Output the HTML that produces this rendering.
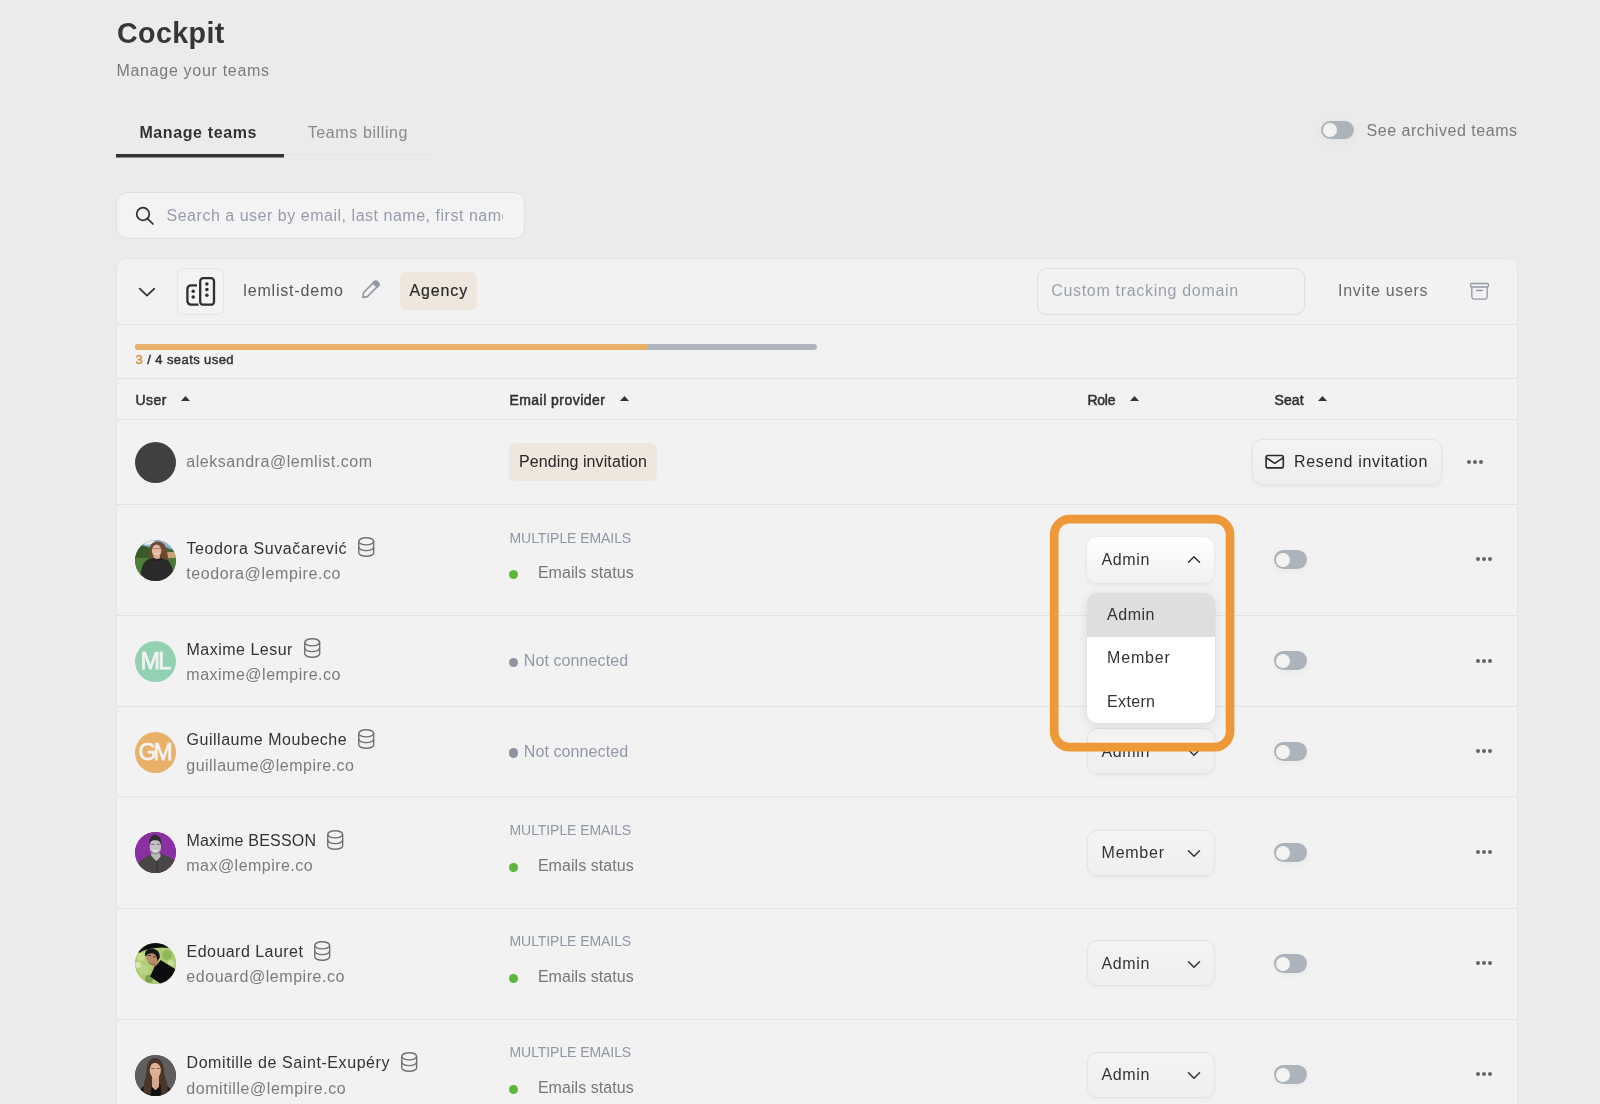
<!DOCTYPE html>
<html lang="en">
<head>
<meta charset="utf-8">
<title>Cockpit</title>
<style>
*{box-sizing:border-box;margin:0;padding:0}
html,body{width:1600px;height:1104px;overflow:hidden}
body{background:#ebebeb;font-family:"Liberation Sans",sans-serif;color:#333;position:relative}
#root{position:absolute;left:0;top:0;width:1600px;height:1104px;will-change:transform}
.a{position:absolute;white-space:nowrap;line-height:1}
.tog{position:absolute;width:32.6px;height:19px;border-radius:9.5px;background:#adb3bb;box-shadow:0 2px 8px rgba(0,0,0,.04)}
.tog i{position:absolute;left:2px;top:2.6px;width:14px;height:14px;border-radius:50%;background:#f3f3f3}
.sep{position:absolute;left:117px;width:1400px;height:1px;background:#e2e2e2}
.sel{position:absolute;left:1087px;width:128px;height:46px;border-radius:10px;border:1px solid #e3e3e3;background:linear-gradient(#f4f4f4,#efefef);box-shadow:0 2px 4px rgba(0,0,0,.04)}
.dots{position:absolute;width:16px;height:4px}
.dots i{position:absolute;top:0;width:4px;height:4px;border-radius:50%;background:#666}
.av{position:absolute;left:135px;width:41px;height:41px;border-radius:50%;overflow:hidden}
</style>
</head>
<body>
<div id="root">
<div class="a" style="left:116.90px;top:19.00px;font-size:28.6px;color:#363636;letter-spacing:0.437px;font-weight:700;">Cockpit</div>
<div class="a" style="left:116.50px;top:63.00px;font-size:16px;color:#7b7b7b;letter-spacing:0.693px;">Manage your teams</div>
<div class="a" style="left:139.40px;top:125.00px;font-size:16px;color:#333;letter-spacing:0.612px;font-weight:700;">Manage teams</div>
<div class="a" style="left:307.70px;top:125.00px;font-size:16px;color:#8a8a8a;letter-spacing:0.610px;">Teams billing</div>
<div class="a" style="left:116px;top:154px;width:168px;height:3px;background:#333"></div>
<div class="a" style="left:116px;top:157px;width:168px;height:1px;background:#8a8a8a"></div>
<div class="a" style="left:284px;top:154px;width:147px;height:1px;background:#e4e4e4"></div>
<div class="tog" style="left:1321px;top:121px;height:18px"><i style="top:2px"></i></div>
<div class="a" style="left:1366.50px;top:123.00px;font-size:16px;color:#7b7b7b;letter-spacing:0.535px;">See archived teams</div>
<div class="a" style="left:116px;top:192px;width:409px;height:47px;border-radius:11px;background:#f3f3f3;border:1px solid #e0e0e0"></div>
<svg class="a" style="left:134px;top:205px" width="22" height="22" viewBox="0 0 22 22" fill="none" stroke="#2f2f2f" stroke-width="1.7" stroke-linecap="round"><circle cx="9" cy="9" r="6.3"/><path d="M13.8 13.8 19 19"/></svg>
<div class="a" style="left:166.50px;top:208.00px;font-size:16px;color:#959cab;letter-spacing:0.522px;width:336px;overflow:hidden;">Search a user by email, last name, first name</div>
<div class="a" style="left:116px;top:258px;width:1402px;height:900px;background:#f2f2f2;border:1px solid #e6e6e6;border-radius:10px"></div>
<svg class="a" style="left:136px;top:284px" width="22" height="16" viewBox="0 0 22 16" fill="none" stroke="#333" stroke-width="1.8" stroke-linecap="round" stroke-linejoin="round"><path d="M3.7 4.6 11 11.6 18.3 4.6"/></svg>
<div class="a" style="left:177px;top:268px;width:47px;height:46.5px;border-radius:7px;background:#f3f3f3;border:1px solid #e4e4e4"></div>
<svg class="a" style="left:184px;top:275px" width="34" height="34" viewBox="0 0 34 34" fill="none" stroke="#2f2f2f" stroke-width="2.3" stroke-linejoin="round"><rect x="16.2" y="3.2" width="13.8" height="26.5" rx="3"/><path d="M13 10.300H7a3.600 3.600 0 0 0-3.600 3.600v12.200a3.600 3.600 0 0 0 3.600 3.600h7.500" stroke-linecap="butt"/><g fill="#2f2f2f" stroke="none"><circle cx="22.9" cy="8.9" r="1.75"/><circle cx="22.9" cy="14.6" r="1.75"/><circle cx="22.9" cy="20.2" r="1.75"/><circle cx="9.2" cy="16.3" r="1.75"/><circle cx="9.2" cy="21.9" r="1.75"/></g></svg>
<div class="a" style="left:243.30px;top:283.00px;font-size:16px;color:#555;letter-spacing:0.819px;">lemlist-demo</div>
<svg class="a" style="left:360px;top:278px" width="22" height="22" viewBox="0 0 22 22" fill="none" stroke="#9299a5" stroke-width="1.6" stroke-linejoin="round" stroke-linecap="round"><path d="M14.6 3.4 18.6 7.4 7.4 18.6 2.8 19.4 3.6 14.6Z"/><path d="M13 5l4 4 1.8-1.8a1.4 1.4 0 0 0 0-2L17 3.400a1.400 1.400 0 0 0-2 0Z" fill="#9299a5"/></svg>
<div class="a" style="left:400px;top:272px;width:77.3px;height:37.8px;border-radius:6px;background:#efe6dd"></div>
<div class="a" style="left:409.50px;top:283.00px;font-size:16px;color:#2a2a2a;letter-spacing:0.868px;-webkit-text-stroke:0.2px #2a2a2a;">Agency</div>
<div class="a" style="left:1037px;top:268px;width:267.5px;height:46.5px;border-radius:10px;background:#f2f2f2;border:1px solid #dedede;box-shadow:0 1px 2px rgba(0,0,0,.03)"></div>
<div class="a" style="left:1051.20px;top:283.00px;font-size:16px;color:#9aa0ab;letter-spacing:0.690px;">Custom tracking domain</div>
<div class="a" style="left:1338.00px;top:283.00px;font-size:16px;color:#6a6a6a;letter-spacing:0.708px;">Invite users</div>
<svg class="a" style="left:1468px;top:280px" width="24" height="22" viewBox="0 0 24 22" fill="none" stroke="#9299a5" stroke-width="1.3" stroke-linejoin="round" stroke-linecap="round"><rect x="2.6" y="3.5" width="17.8" height="3.5" rx="1"/><path d="M3.8 7v9.600a2.600 2.600 0 0 0 2.600 2.600h10.200a2.600 2.600 0 0 0 2.600-2.600V7"/><path d="M8.600 10.500h5.800"/></svg>
<div class="sep" style="top:324px"></div>
<div class="a" style="left:135px;top:343.6px;width:682px;height:6.8px;background:#b0b5bd;border-radius:3.5px"></div>
<div class="a" style="left:135px;top:343.6px;width:512px;height:6.8px;background:#e8b068;border-radius:3.5px 0 0 3.5px"></div>
<div class="a" style="left:135.60px;top:353.00px;font-size:13px;color:#333;letter-spacing:0.408px;-webkit-text-stroke:0.45px #333;"><span style="color:#d9913b;-webkit-text-stroke-color:#d9913b">3</span> / 4 seats used</div>
<div class="sep" style="top:378px"></div>
<div class="a" style="left:135.60px;top:393.00px;font-size:14px;color:#303030;letter-spacing:0.382px;-webkit-text-stroke:0.5px #303030;">User</div>
<svg class="a" style="left:181.2px;top:396px" width="9" height="5" viewBox="0 0 9 5"><path d="M4.500 0 9 5H0Z" fill="#333"/></svg>
<div class="a" style="left:509.40px;top:393.00px;font-size:14px;color:#303030;letter-spacing:0.471px;-webkit-text-stroke:0.5px #303030;">Email provider</div>
<svg class="a" style="left:619.7px;top:396px" width="9" height="5" viewBox="0 0 9 5"><path d="M4.500 0 9 5H0Z" fill="#333"/></svg>
<div class="a" style="left:1087.40px;top:393.00px;font-size:14px;color:#303030;letter-spacing:-0.233px;-webkit-text-stroke:0.5px #303030;">Role</div>
<svg class="a" style="left:1130.2px;top:396px" width="9" height="5" viewBox="0 0 9 5"><path d="M4.500 0 9 5H0Z" fill="#333"/></svg>
<div class="a" style="left:1274.40px;top:393.00px;font-size:14px;color:#303030;letter-spacing:0.167px;-webkit-text-stroke:0.5px #303030;">Seat</div>
<svg class="a" style="left:1318.2px;top:396px" width="9" height="5" viewBox="0 0 9 5"><path d="M4.500 0 9 5H0Z" fill="#333"/></svg>
<div class="sep" style="top:419px"></div>
<div class="av" style="top:441.8px;background:#404040"></div>
<div class="a" style="left:186.30px;top:454.00px;font-size:16px;color:#7b7b7b;letter-spacing:0.532px;">aleksandra@lemlist.com</div>
<div class="a" style="left:509px;top:443px;width:148.2px;height:37.7px;border-radius:6px;background:#efe6dd"></div>
<div class="a" style="left:519.00px;top:454.00px;font-size:16px;color:#272727;letter-spacing:0.099px;">Pending invitation</div>
<div class="a" style="left:1251.5px;top:439.3px;width:190px;height:45.6px;border-radius:10px;border:1px solid #e3e3e3;background:linear-gradient(#f4f4f4,#eeeeee);box-shadow:0 2px 4px rgba(0,0,0,.05)"></div>
<svg class="a" style="left:1263px;top:452px" width="24" height="20" viewBox="0 0 24 20" fill="none" stroke="#2a2a2a" stroke-width="1.6" stroke-linejoin="round" stroke-linecap="round"><rect x="3.100" y="3.500" width="17.2" height="12.400" rx="2"/><path d="M3.400 5.800 11.700 11.300 20 5.800"/></svg>
<div class="a" style="left:1294.00px;top:454.00px;font-size:16px;color:#2a2a2a;letter-spacing:0.660px;">Resend invitation</div>
<div class="dots" style="left:1467px;top:459.7px"><i style="left:0"></i><i style="left:5.8px"></i><i style="left:11.6px"></i></div>
<div class="sep" style="top:504px"></div>
<div class="av" style="top:539.7px;background:#4a7a3a"><svg width="41" height="41" viewBox="0 0 41 41"><defs><filter id="b2"><feGaussianBlur stdDeviation=".55"/></filter></defs><g filter="url(#b2)"><rect width="41" height="41" fill="#3f6b31"/><path d="M0 0h41v11L30 7 18 8 6 5 0 9Z" fill="#8fb0d8"/><path d="M8 0h12l-2 4-8 1Z" fill="#e9eef5"/><path d="M0 9 8 6l10 5v12H0Z" fill="#375a2c"/><path d="M0 18h14v23H0Z" fill="#4d7f3a"/><path d="M30 12h11v8H31Z" fill="#c9a27a"/><path d="M31 18h10v23H28Z" fill="#467a35"/><path d="M14.500 17C13 9 15 2 22 1.500 29.500 1 32 8 32.500 14 33 19 34 20 33.500 21.500L27 19 16 19Z" fill="#6e4a33"/><ellipse cx="21.600" cy="10.800" rx="4.700" ry="6.200" fill="#e3b7a0"/><path d="M18.500 13.500h6.500v7h-6.500Z" fill="#dcae96"/><path d="M19.500 13.300q2.300 1.500 4.500 0" stroke="#fff" stroke-width=".8" fill="none"/><path d="M17 8.500h9" stroke="#8a6a5a" stroke-width=".6"/><path d="M5 41C5.500 29 8 21 14 19l5-1.200q3 2.500 6.500 0L31 19.500c5 2 7.500 9 8 21.500Z" fill="#2b2b2c"/><path d="M18.500 18q3.500 3.400 7.500 0l.6 1.200q-4.300 3.600-8.800 0Z" fill="#1c1c1c"/></g></svg></div>
<div class="a" style="left:186.50px;top:541.00px;font-size:16px;color:#333;letter-spacing:0.594px;">Teodora Suvačarević</div>
<svg class="a" style="left:356.9px;top:536.2px" width="19" height="22" viewBox="0 0 19 22" fill="none" stroke="#707070" stroke-width="1.4"><ellipse cx="9.2" cy="5.3" rx="7.45" ry="3.6"/><path d="M1.75 5.300v11.400c0 2 3.300 3.600 7.450 3.600s7.450-1.600 7.450-3.600V5.300"/><path d="M1.75 11c0 2 3.300 3.600 7.450 3.600s7.450-1.600 7.450-3.600"/></svg>
<div class="a" style="left:186.30px;top:566.00px;font-size:16px;color:#7b7b7b;letter-spacing:0.575px;">teodora@lempire.co</div>
<div class="a" style="left:509.50px;top:531.00px;font-size:14px;color:#8f97a5;letter-spacing:-0.069px;">MULTIPLE EMAILS</div>
<div class="a" style="left:509.1px;top:570.0px;width:9.4px;height:9.2px;border-radius:50%;background:#5bb83b"></div>
<div class="a" style="left:537.90px;top:565.00px;font-size:16px;color:#777;letter-spacing:0.055px;">Emails status</div>
<div class="sel" style="top:537px;width:127px;background:linear-gradient(#fff,#f1f1f1);border:none;box-shadow:0 2px 5px rgba(0,0,0,.06),0 0 1px rgba(0,0,0,.08)"></div>
<div class="a" style="left:1101.60px;top:552.00px;font-size:16px;color:#333;letter-spacing:0.585px;">Admin</div>
<svg class="a" style="left:1187.3px;top:554.6px" width="14" height="9" viewBox="0 0 14 9" fill="none" stroke="#333" stroke-width="1.5" stroke-linecap="round" stroke-linejoin="round"><path d="M1.5 7.300 7 1.800 12.500 7.300"/></svg>
<div class="tog" style="left:1274px;top:550px"><i></i></div>
<div class="dots" style="left:1476px;top:557.4px"><i style="left:0"></i><i style="left:5.8px"></i><i style="left:11.6px"></i></div>
<div class="sep" style="top:615px"></div>
<div class="av" style="top:640.8px;background:#92d1b1"></div>
<div class="a" style="left:140.80px;top:650.00px;font-size:23px;color:#f3f3f3;letter-spacing:-1.747px;-webkit-text-stroke:0.75px #f3f3f3;">ML</div>
<div class="a" style="left:186.50px;top:642.00px;font-size:16px;color:#333;letter-spacing:0.493px;">Maxime Lesur</div>
<svg class="a" style="left:302.7px;top:637.3px" width="19" height="22" viewBox="0 0 19 22" fill="none" stroke="#707070" stroke-width="1.4"><ellipse cx="9.2" cy="5.3" rx="7.45" ry="3.6"/><path d="M1.75 5.300v11.400c0 2 3.300 3.600 7.450 3.600s7.450-1.600 7.450-3.600V5.300"/><path d="M1.75 11c0 2 3.300 3.600 7.450 3.600s7.450-1.600 7.450-3.600"/></svg>
<div class="a" style="left:186.30px;top:667.00px;font-size:16px;color:#7b7b7b;letter-spacing:0.503px;">maxime@lempire.co</div>
<div class="a" style="left:509.1px;top:657.75px;width:9.4px;height:9.35px;border-radius:50%;background:#8d93a1"></div>
<div class="a" style="left:523.80px;top:653.00px;font-size:16px;color:#9098a6;letter-spacing:0.093px;">Not connected</div>
<div class="tog" style="left:1274px;top:651px"><i></i></div>
<div class="dots" style="left:1476px;top:658.5px"><i style="left:0"></i><i style="left:5.8px"></i><i style="left:11.6px"></i></div>
<div class="sep" style="top:706px"></div>
<div class="av" style="top:731.5px;background:#e8b068"></div>
<div class="a" style="left:138.60px;top:741.00px;font-size:23px;color:#f3f3f3;letter-spacing:-3.053px;-webkit-text-stroke:0.75px #f3f3f3;">GM</div>
<div class="a" style="left:186.50px;top:732.00px;font-size:16px;color:#333;letter-spacing:0.529px;">Guillaume Moubeche</div>
<svg class="a" style="left:357.0px;top:728.0px" width="19" height="22" viewBox="0 0 19 22" fill="none" stroke="#707070" stroke-width="1.4"><ellipse cx="9.2" cy="5.3" rx="7.45" ry="3.6"/><path d="M1.75 5.300v11.400c0 2 3.300 3.600 7.450 3.600s7.450-1.600 7.450-3.600V5.300"/><path d="M1.75 11c0 2 3.300 3.600 7.450 3.600s7.450-1.600 7.450-3.600"/></svg>
<div class="a" style="left:186.30px;top:758.00px;font-size:16px;color:#7b7b7b;letter-spacing:0.477px;">guillaume@lempire.co</div>
<div class="a" style="left:509.1px;top:748.45px;width:9.4px;height:9.35px;border-radius:50%;background:#8d93a1"></div>
<div class="a" style="left:523.80px;top:744.00px;font-size:16px;color:#9098a6;letter-spacing:0.093px;">Not connected</div>
<div class="sel" style="top:728px;"></div>
<div class="a" style="left:1101.60px;top:744.00px;font-size:16px;color:#333;letter-spacing:0.585px;">Admin</div>
<svg class="a" style="left:1187.3px;top:748.3px" width="14" height="9" viewBox="0 0 14 9" fill="none" stroke="#333" stroke-width="1.5" stroke-linecap="round" stroke-linejoin="round"><path d="M1.5 1.800 7 7.300 12.500 1.800"/></svg>
<div class="tog" style="left:1274px;top:742px"><i></i></div>
<div class="dots" style="left:1476px;top:749.2px"><i style="left:0"></i><i style="left:5.8px"></i><i style="left:11.6px"></i></div>
<div class="sep" style="top:796px;background:#e7e7e7"></div><div class="sep" style="top:797px;background:#ececec"></div>
<div class="av" style="top:832.3px;background:#8a30a2"><svg width="41" height="41" viewBox="0 0 41 41"><defs><filter id="b5"><feGaussianBlur stdDeviation=".45"/></filter></defs><rect width="41" height="41" fill="#8a30a2"/><g filter="url(#b5)"><path d="M0 41V34C4 29.500 10 25 16 22.300l4-.8h2l4 .3C31 23.500 37 26 41 29.500V41Z" fill="#4a4744"/><path d="M16.500 20.500h7.500l2 3.500-4.500 5.500-5.500-6Z" fill="#b8b8b8"/><path d="M22 41V28.500" stroke="#353331" stroke-width="1.200"/><ellipse cx="20.300" cy="14.800" rx="5.700" ry="7.700" fill="#c4c4c4"/><path d="M14.300 13C13.500 7 16 3.500 19.500 2.400 24 3.500 27 6 26.500 13 25.500 9.500 24 8 20 8.200 16.500 8.300 15 9.500 14.300 13Z" fill="#2e2e2e"/><path d="M15.500 12.300h4M21.500 12.300h4" stroke="#555" stroke-width=".8"/><path d="M17.500 18.200q3 1.800 5.800 0" stroke="#f2f2f2" stroke-width="1" fill="none"/><path d="M15.300 17.500q5 7.500 10 0l-.5 3q-4.500 4-9 0Z" fill="#8c8c8c"/></g></svg></div>
<div class="a" style="left:186.50px;top:833.00px;font-size:16px;color:#333;letter-spacing:0.197px;">Maxime BESSON</div>
<svg class="a" style="left:326.3px;top:828.8px" width="19" height="22" viewBox="0 0 19 22" fill="none" stroke="#707070" stroke-width="1.4"><ellipse cx="9.2" cy="5.3" rx="7.45" ry="3.6"/><path d="M1.75 5.300v11.400c0 2 3.300 3.600 7.450 3.600s7.450-1.600 7.450-3.600V5.300"/><path d="M1.75 11c0 2 3.300 3.600 7.450 3.600s7.450-1.600 7.450-3.600"/></svg>
<div class="a" style="left:186.30px;top:858.00px;font-size:16px;color:#7b7b7b;letter-spacing:0.464px;">max@lempire.co</div>
<div class="a" style="left:509.50px;top:823.00px;font-size:14px;color:#8f97a5;letter-spacing:-0.069px;">MULTIPLE EMAILS</div>
<div class="a" style="left:509.1px;top:862.6px;width:9.4px;height:9.2px;border-radius:50%;background:#5bb83b"></div>
<div class="a" style="left:537.90px;top:858.00px;font-size:16px;color:#777;letter-spacing:0.055px;">Emails status</div>
<div class="sel" style="top:830px;"></div>
<div class="a" style="left:1101.60px;top:845.00px;font-size:16px;color:#333;letter-spacing:0.742px;">Member</div>
<svg class="a" style="left:1187.3px;top:849.1px" width="14" height="9" viewBox="0 0 14 9" fill="none" stroke="#333" stroke-width="1.5" stroke-linecap="round" stroke-linejoin="round"><path d="M1.5 1.800 7 7.300 12.500 1.800"/></svg>
<div class="tog" style="left:1274px;top:843px"><i></i></div>
<div class="dots" style="left:1476px;top:850.0px"><i style="left:0"></i><i style="left:5.8px"></i><i style="left:11.6px"></i></div>
<div class="sep" style="top:908px"></div>
<div class="av" style="top:943.4px;background:#9fc268"><svg width="41" height="41" viewBox="0 0 41 41"><defs><filter id="b6"><feGaussianBlur stdDeviation=".6"/></filter></defs><g filter="url(#b6)"><rect width="41" height="41" fill="#aecd74"/><circle cx="6" cy="14" r="4" fill="#c4dc8c"/><circle cx="32" cy="12" r="5" fill="#8fb85a"/><circle cx="9" cy="27" r="5" fill="#b9d486"/><circle cx="14" cy="36" r="4" fill="#7da34e"/><circle cx="36" cy="20" r="3" fill="#c8de94"/><circle cx="3" cy="22" r="3" fill="#d6e4b0"/><path d="M0 0h41v7Q31 3.500 21 5 11 5.500 4 10Z" fill="#0c0c0c"/><path d="M19 19l6 1.500 1 3-5 3.500-3-4Z" fill="#a87a58"/><ellipse cx="17.500" cy="14.600" rx="6.300" ry="7.800" transform="rotate(-20 17.500 14.600)" fill="#b98b66"/><path d="M10.300 13.500C9 7 14 4.500 19 6c4.300 1 6 4.300 5.800 8.500l-2.300 3.500q-.3-5.500-4-7.500-4.500-1.500-8.200 3Z" fill="#161616"/><path d="M13 12.500h3M18 14h2.500" stroke="#3a2a20" stroke-width=".9"/><path d="M14 20q3 2.500 6 1" stroke="#7a5540" stroke-width=".8" fill="none"/><path d="M25.500 17 41 26.500V41H26L15 33.500l4.500-9.500 3-2.500Z" fill="#0b0b10"/></g></svg></div>
<div class="a" style="left:186.50px;top:944.00px;font-size:16px;color:#333;letter-spacing:0.469px;">Edouard Lauret</div>
<svg class="a" style="left:313.2px;top:939.9px" width="19" height="22" viewBox="0 0 19 22" fill="none" stroke="#707070" stroke-width="1.4"><ellipse cx="9.2" cy="5.3" rx="7.45" ry="3.6"/><path d="M1.75 5.300v11.400c0 2 3.300 3.600 7.450 3.600s7.450-1.600 7.450-3.600V5.300"/><path d="M1.75 11c0 2 3.300 3.600 7.450 3.600s7.450-1.600 7.450-3.600"/></svg>
<div class="a" style="left:186.30px;top:969.00px;font-size:16px;color:#7b7b7b;letter-spacing:0.555px;">edouard@lempire.co</div>
<div class="a" style="left:509.50px;top:934.00px;font-size:14px;color:#8f97a5;letter-spacing:-0.069px;">MULTIPLE EMAILS</div>
<div class="a" style="left:509.1px;top:973.7px;width:9.4px;height:9.2px;border-radius:50%;background:#5bb83b"></div>
<div class="a" style="left:537.90px;top:969.00px;font-size:16px;color:#777;letter-spacing:0.055px;">Emails status</div>
<div class="sel" style="top:940px;"></div>
<div class="a" style="left:1101.60px;top:956.00px;font-size:16px;color:#333;letter-spacing:0.585px;">Admin</div>
<svg class="a" style="left:1187.3px;top:960.2px" width="14" height="9" viewBox="0 0 14 9" fill="none" stroke="#333" stroke-width="1.5" stroke-linecap="round" stroke-linejoin="round"><path d="M1.5 1.800 7 7.300 12.500 1.800"/></svg>
<div class="tog" style="left:1274px;top:954px"><i></i></div>
<div class="dots" style="left:1476px;top:961.1px"><i style="left:0"></i><i style="left:5.8px"></i><i style="left:11.6px"></i></div>
<div class="sep" style="top:1019px"></div>
<div class="av" style="top:1054.5px;background:#5a5a5a"><svg width="41" height="41" viewBox="0 0 41 41"><defs><filter id="b7"><feGaussianBlur stdDeviation=".5"/></filter></defs><rect width="41" height="41" fill="#5e5e5e"/><g filter="url(#b7)"><path d="M4 41c.5-6 3-10 8-11.500l8-2 9 2c5 1.500 7.500 5.500 8 11.500Z" fill="#141414"/><path d="M8.500 37.500C7.500 30 11.500 22 11.500 15 12 7 15.500 3 20 3c5 0 8.500 4 9 12 .3 7 4.500 14 3.800 22l-6.300 3.500-1-12h-8.500l-1 12Z" fill="#4b3527"/><path d="M17 20h7v12l-3.500 3.500L17 32Z" fill="#d3a58a"/><ellipse cx="20.300" cy="15" rx="5.600" ry="8" fill="#e0b298"/><path d="M14.700 14C14 8 16.500 5 20 5c4 0 6.500 3 5.800 9-1-4-2.500-6-5.800-6s-4.500 2-5.300 6Z" fill="#4b3527"/><path d="M16.200 13.500h3M21.500 13.500h3" stroke="#5a4a48" stroke-width=".8"/><path d="M17.500 18.800q2.800 1.600 5.600 0-2.800 3.600-5.600 0Z" fill="#fff" stroke="#b5655c" stroke-width=".4"/><path d="M15 41l2-9 3.500 3.500L24 32l2 9Z" fill="#101010"/></g></svg></div>
<div class="a" style="left:186.50px;top:1055.00px;font-size:16px;color:#333;letter-spacing:0.579px;">Domitille de Saint-Exupéry</div>
<svg class="a" style="left:399.8px;top:1051.0px" width="19" height="22" viewBox="0 0 19 22" fill="none" stroke="#707070" stroke-width="1.4"><ellipse cx="9.2" cy="5.3" rx="7.45" ry="3.6"/><path d="M1.75 5.300v11.400c0 2 3.300 3.600 7.450 3.600s7.450-1.600 7.450-3.600V5.300"/><path d="M1.75 11c0 2 3.300 3.600 7.450 3.600s7.450-1.600 7.450-3.600"/></svg>
<div class="a" style="left:186.30px;top:1081.00px;font-size:16px;color:#7b7b7b;letter-spacing:0.556px;">domitille@lempire.co</div>
<div class="a" style="left:509.50px;top:1045.00px;font-size:14px;color:#8f97a5;letter-spacing:-0.069px;">MULTIPLE EMAILS</div>
<div class="a" style="left:509.1px;top:1084.8px;width:9.4px;height:9.2px;border-radius:50%;background:#5bb83b"></div>
<div class="a" style="left:537.90px;top:1080.00px;font-size:16px;color:#777;letter-spacing:0.055px;">Emails status</div>
<div class="sel" style="top:1052px;"></div>
<div class="a" style="left:1101.60px;top:1067.00px;font-size:16px;color:#333;letter-spacing:0.585px;">Admin</div>
<svg class="a" style="left:1187.3px;top:1071.3px" width="14" height="9" viewBox="0 0 14 9" fill="none" stroke="#333" stroke-width="1.5" stroke-linecap="round" stroke-linejoin="round"><path d="M1.5 1.800 7 7.300 12.500 1.800"/></svg>
<div class="tog" style="left:1274px;top:1065px"><i></i></div>
<div class="dots" style="left:1476px;top:1072.2px"><i style="left:0"></i><i style="left:5.8px"></i><i style="left:11.6px"></i></div>
<div class="a" style="left:1087px;top:593.2px;width:128px;height:130px;border-radius:10px;background:#fff;box-shadow:0 3px 12px rgba(0,0,0,.10),0 0 2px rgba(0,0,0,.06);overflow:hidden"></div>
<div class="a" style="left:1087px;top:593.2px;width:128px;height:43.6px;border-radius:10px 10px 0 0;background:#dedede"></div>
<div class="a" style="left:1107.00px;top:607.00px;font-size:16px;color:#333;letter-spacing:0.535px;">Admin</div>
<div class="a" style="left:1107.00px;top:650.00px;font-size:16px;color:#333;letter-spacing:0.842px;">Member</div>
<div class="a" style="left:1107.00px;top:694.00px;font-size:16px;color:#333;letter-spacing:0.352px;">Extern</div>
<svg class="a" style="left:1040px;top:505px" width="210" height="260" viewBox="0 0 210 260" fill="none"><rect x="14.15" y="14.15" width="175.9" height="228" rx="15.6" stroke="#ee9837" stroke-width="8.7"/></svg>
</div>
</body>
</html>
